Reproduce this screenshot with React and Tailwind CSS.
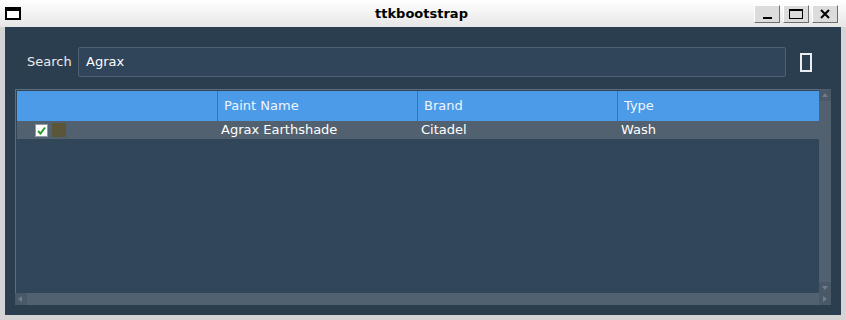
import React from 'react';

const font = { fontFamily: '"DejaVu Sans", sans-serif' };

function TitleButton({ children }) {
  return (
    <div className="w-[26px] h-[18px] bg-[#dcdcdc] border border-t-white border-l-white border-r-[#6e6e6e] border-b-[#6e6e6e] flex items-center justify-center">
      {children}
    </div>
  );
}

function ArrowBox({ dir, className = '' }) {
  const paths = {
    up: 'M1 5 L4 1 L7 5 Z',
    down: 'M1 2 L7 2 L4 6 Z',
    left: 'M5 1 L5 7 L1 4 Z',
    right: 'M2 1 L2 7 L6 4 Z',
  };
  return (
    <div className={`w-[12px] h-[11px] bg-[#4a5968] flex items-center justify-center ${className}`}>
      <svg width="8" height="8" viewBox="0 0 8 8">
        <path d={paths[dir]} fill="#6f7d8b" />
      </svg>
    </div>
  );
}

export default function App() {
  return (
    <div className="w-[846px] h-[320px] bg-[#d4d4d4] flex flex-col" style={font}>
      {/* Title bar */}
      <div className="h-[27px] bg-gradient-to-b from-white to-[#e6e6e6] flex items-center">
        <div className="ml-[5px] w-[16px] h-[13px] border-2 border-black border-t-[4px] bg-white" />
        <div className="flex-1 text-center text-[13px] font-bold text-black pl-[68px]">ttkbootstrap</div>
        <div className="flex gap-[3px] mr-[8px]">
          <TitleButton>
            <div className="w-[9px] h-[2px] bg-black mt-[9px]" />
          </TitleButton>
          <TitleButton>
            <div className="w-[14px] h-[10px] border border-black border-t-2" />
          </TitleButton>
          <TitleButton>
            <svg width="10" height="10" viewBox="0 0 10 10">
              <path d="M1 1 L9 9 M9 1 L1 9" stroke="black" strokeWidth="2" />
            </svg>
          </TitleButton>
        </div>
      </div>

      {/* Window body */}
      <div className="mx-[5px] h-[288px] bg-[#2b3e50] flex flex-col text-[13px] text-[#ebebeb]">
        {/* Search row */}
        <div className="flex items-center mt-[20px] h-[30px]">
          <span className="ml-[22px] w-[51px]">Search</span>
          <div className="w-[708px] h-[30px] bg-[#30455a] border border-[#4e6072] rounded-[2px] flex items-center pl-[7px] text-white">
            Agrax
          </div>
          <div className="ml-[14px] w-[12px] h-[19px] border-2 border-[#e8eef4] bg-[#2b3e50]" />
        </div>

        {/* Treeview */}
        <div className="ml-[10px] mr-[10px] mt-[12px] h-[216px] flex flex-col">
          <div className="flex flex-1 min-h-0">
            <div className="flex-1 border-l border-t border-[#5c6d7e] bg-[#32465a] pl-[1px] pt-[1px] flex flex-col">
              <div className="h-[30px] bg-[#4c9be8] flex text-[#eef5fd]">
                <div className="w-[201px] border-r border-[#3c72a8]" />
                <div className="w-[200px] border-r border-[#3c72a8] pl-[6px] flex items-center">Paint Name</div>
                <div className="w-[200px] border-r border-[#3c72a8] pl-[6px] flex items-center">Brand</div>
                <div className="flex-1 pl-[6px] flex items-center">Type</div>
              </div>
              <div className="h-[18px] bg-[#526170] flex items-center text-white">
                <div className="w-[200px] flex items-center">
                  <div className="ml-[18px] w-[13px] h-[13px] bg-white border border-[#8f9aa6] flex items-center justify-center">
                    <svg width="9" height="9" viewBox="0 0 9 9">
                      <path d="M1 5 L3.5 7.5 L8 1.5" stroke="#2a9a2a" strokeWidth="2" fill="none" />
                    </svg>
                  </div>
                  <div className="ml-[4px] w-[14px] h-[14px] bg-[#5b5637]" />
                </div>
                <div className="w-[200px] pl-[4px]">Agrax Earthshade</div>
                <div className="w-[200px] pl-[4px]">Citadel</div>
                <div className="flex-1 pl-[4px]">Wash</div>
              </div>
            </div>
            <div className="w-[12px] bg-[#526170] flex flex-col justify-between">
              <ArrowBox dir="up" className="mt-[1px]" />
              <ArrowBox dir="down" />
            </div>
          </div>
          <div className="h-[12px] bg-[#526170] flex justify-between">
            <ArrowBox dir="left" className="h-[12px]" />
            <ArrowBox dir="right" className="h-[12px]" />
          </div>
        </div>
      </div>
    </div>
  );
}
